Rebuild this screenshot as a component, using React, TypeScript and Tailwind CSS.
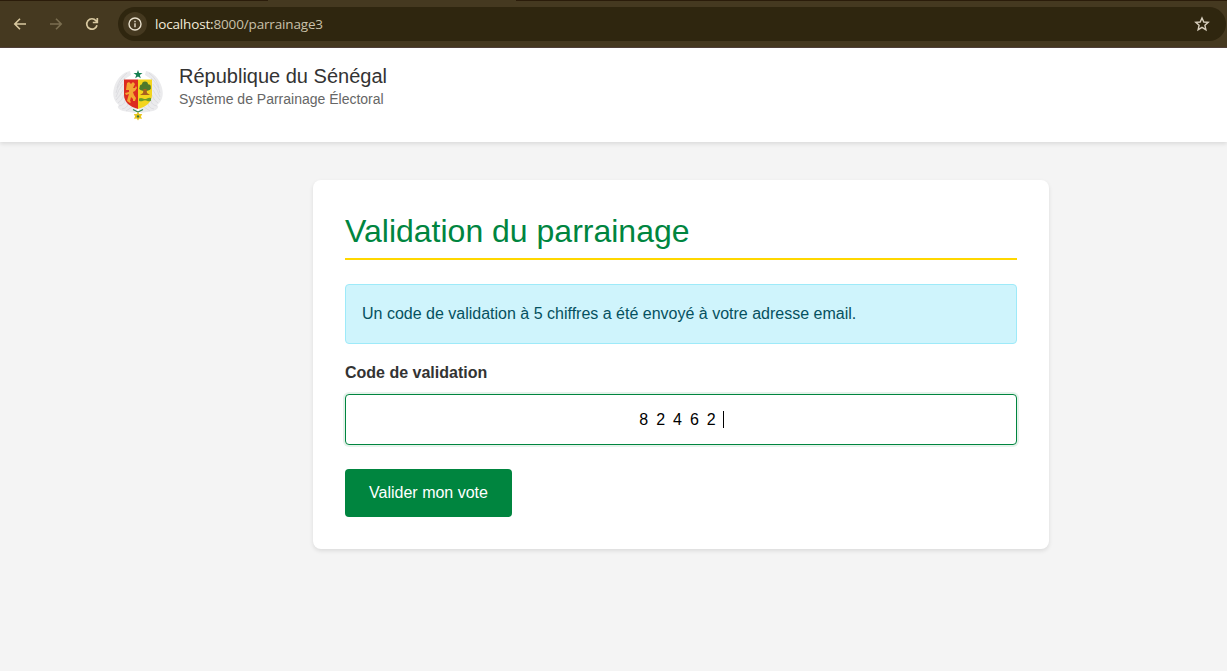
function BrowserBar() {
  return (
    <div className="flex h-12 flex-col border-b border-[#50403a] bg-[#453920]">
      <div className="flex h-px shrink-0 justify-between">
        <div className="w-[268px] bg-[#2b1c0a]" />
        <div className="w-[711px] bg-[#2b1c0a]" />
      </div>
      <div className="mt-1.5 flex h-[34px] items-center pr-px">
        <div className="flex w-[118px] shrink-0 items-center gap-5 pl-3">
          <svg width="16" height="16" viewBox="0 0 16 16" fill="none" stroke="#d9c9a0" strokeWidth="1.6">
            <path d="M14 8H3M8 2.8L2.8 8L8 13.2" />
          </svg>
          <svg width="16" height="16" viewBox="0 0 16 16" fill="none" stroke="#7b6e50" strokeWidth="1.6">
            <path d="M2 8h11M8 2.8L13.2 8L8 13.2" />
          </svg>
          <svg width="16" height="16" viewBox="0 0 16 16" fill="none" stroke="#d9c9a0" strokeWidth="1.7">
            <path d="M13 9.2A5.2 5.2 0 1 1 12 4.7L13.4 6.3M13.3 2v4.5H8.8" />
          </svg>
        </div>
        <div className="flex h-[34px] flex-1 items-center rounded-full bg-[#2f260f] pr-4 pl-[5px]">
          <div className="flex h-6 w-6 items-center justify-center rounded-full bg-[#453920]">
            <svg width="16" height="16" viewBox="0 0 16 16" fill="none" stroke="#e7dfcc" strokeWidth="1.4">
              <circle cx="8" cy="8" r="6" />
              <path d="M8 7.2v4M8 4.7v1.5" />
            </svg>
          </div>
          <div className="ml-2 flex-1 font-['Open_Sans','Noto_Sans',sans-serif] text-[13.5px] leading-5 tracking-[-0.16px] text-[#c9c0aa]">
            <span className="text-[#f3ecda]">localhost:</span>8000/parrainage3
          </div>
          <svg width="16" height="16" viewBox="0 0 16 16" fill="none" stroke="#d8cfbe" strokeWidth="1.4">
            <path d="M8 2L9.8 6L14.2 6.4L10.9 9.3L11.9 13.7L8 11.4L4.1 13.7L5.1 9.3L1.8 6.4L6.2 6Z" />
          </svg>
        </div>
      </div>
    </div>
  );
}

function CoatOfArms() {
  return (
    <svg width="50" height="52" viewBox="0 0 50 52" className="shrink-0">
      <g fill="#ebebed">
        <path d="M17 1C10 2 3 9 1 18C-1 25 1 32 6 35C3 37 6 40 10 41L22 43L24 39L12 30V9L18 5Z" />
        <path d="M33 1C40 2 47 9 49 18C51 25 49 32 44 35C47 37 44 40 40 41L28 43L26 39L38 30V9L32 5Z" />
      </g>
      <g fill="none" stroke="#d3d3d8" strokeWidth="0.6">
        <path d="M14 3Q6 9 4 18M12 8Q5 14 3 23M10 14Q5 20 3 27M10 20Q7 26 3 30M11 25Q9 31 5 33M12 30Q12 35 6 36M15 33Q15 38 9 39M19 37L13 41" />
        <path d="M36 3Q44 9 46 18M38 8Q45 14 47 23M40 14Q45 20 47 27M40 20Q43 26 47 30M39 25Q41 31 45 33M38 30Q38 35 44 36M35 33Q35 38 41 39M31 37L37 41" />
      </g>
      <path d="M25 0l1.1 3.1h3.4l-2.7 2 1 3.2L25 6.4l-2.8 1.9 1-3.2-2.7-2h3.4z" fill="#168052" />
      <path d="M11 9.5H25V39C17 37 11 32 11 25Z" fill="#dc2b20" />
      <path d="M25 9.5H39V25C39 32 33 37 25 39Z" fill="#f3d51d" />
      <path d="M14 13l2-1 2 2 2-2 2 2-2 4 2 0 1-2 1 2-2 3-2 1 1 3 2 3-1 3h-2v-2l-2-2-1 4 1 1-1 1-3-2 1-4 1-3-3 1-1-2 4-1 0-2-3 0z" fill="#f3a733" />
      <g fill="#4e792b">
        <circle cx="29.5" cy="17" r="2.8" />
        <circle cx="32" cy="14.5" r="3" />
        <circle cx="35" cy="17" r="2.8" />
        <ellipse cx="32" cy="18.5" rx="5.7" ry="2.5" />
      </g>
      <path d="M30.5 19h3l.5 4 3 2h-10l3-2z" fill="#a8601f" />
      <path d="M26 28.5q2-1 4 0t4 0t4-.5v2.7q-2 1-4 0t-4 0t-4 0z" fill="#689a29" />
      <path d="M20 39.5L25 42l5-2.5" fill="none" stroke="#348554" strokeWidth="1.3" />
      <path d="M25 42l1.4 2 2.8-.1-1.3 2.5 1.2 2.3-2.8-.1L25 50.5l-1.3-1.9-2.8.1 1.2-2.3-1.3-2.5 2.8.1z" fill="#e8c51d" />
      <circle cx="25" cy="46.4" r="1.2" fill="#3d753b" />
    </svg>
  );
}

function Header() {
  return (
    <header className="flex h-[94px] items-start bg-white pl-[113px] shadow-[0_2px_4px_rgba(0,0,0,0.1)]">
      <div className="pt-[22px]">
        <CoatOfArms />
      </div>
      <div className="ml-4 pt-4">
        <div className="text-[20px] leading-6 text-[#333]">République du Sénégal</div>
        <div className="text-[14px] leading-[22px] text-[#666]">Système de Parrainage Électoral</div>
      </div>
    </header>
  );
}

export default function App() {
  return (
    <div className="flex h-[671px] flex-col overflow-hidden bg-[#f4f4f4] font-['Liberation_Sans',Arial,sans-serif] text-base text-[#333]">
      <BrowserBar />
      <Header />
      <main className="mt-[38px] ml-[313px] h-[369px] w-[736px] rounded-lg bg-white p-8 shadow-[0_2px_4px_rgba(0,0,0,0.1)]">
        <h1 className="h-12 border-b-2 border-[#ffd700] text-[32px] leading-[38px] text-[#00853f]">
          Validation du parrainage
        </h1>
        <div className="mt-6 flex h-[60px] items-center rounded border border-[#9eeaf9] bg-[#cff4fc] px-4 text-[#055160]">
          Un code de validation à 5 chiffres a été envoyé à votre adresse email.
        </div>
        <div className="mt-4 h-[34px] leading-[26px] font-bold">Code de validation</div>
        <div className="flex h-[51px] items-center justify-center rounded border border-[#00853f] bg-white pl-px tracking-[8px] text-black shadow-[0_0_0_2px_rgba(0,133,63,0.1)]">
          82462
          <span className="-ml-px h-[17px] w-px bg-black" />
        </div>
        <button className="mt-6 h-12 w-[167px] rounded bg-[#00853f] text-white">Valider mon vote</button>
      </main>
    </div>
  );
}
